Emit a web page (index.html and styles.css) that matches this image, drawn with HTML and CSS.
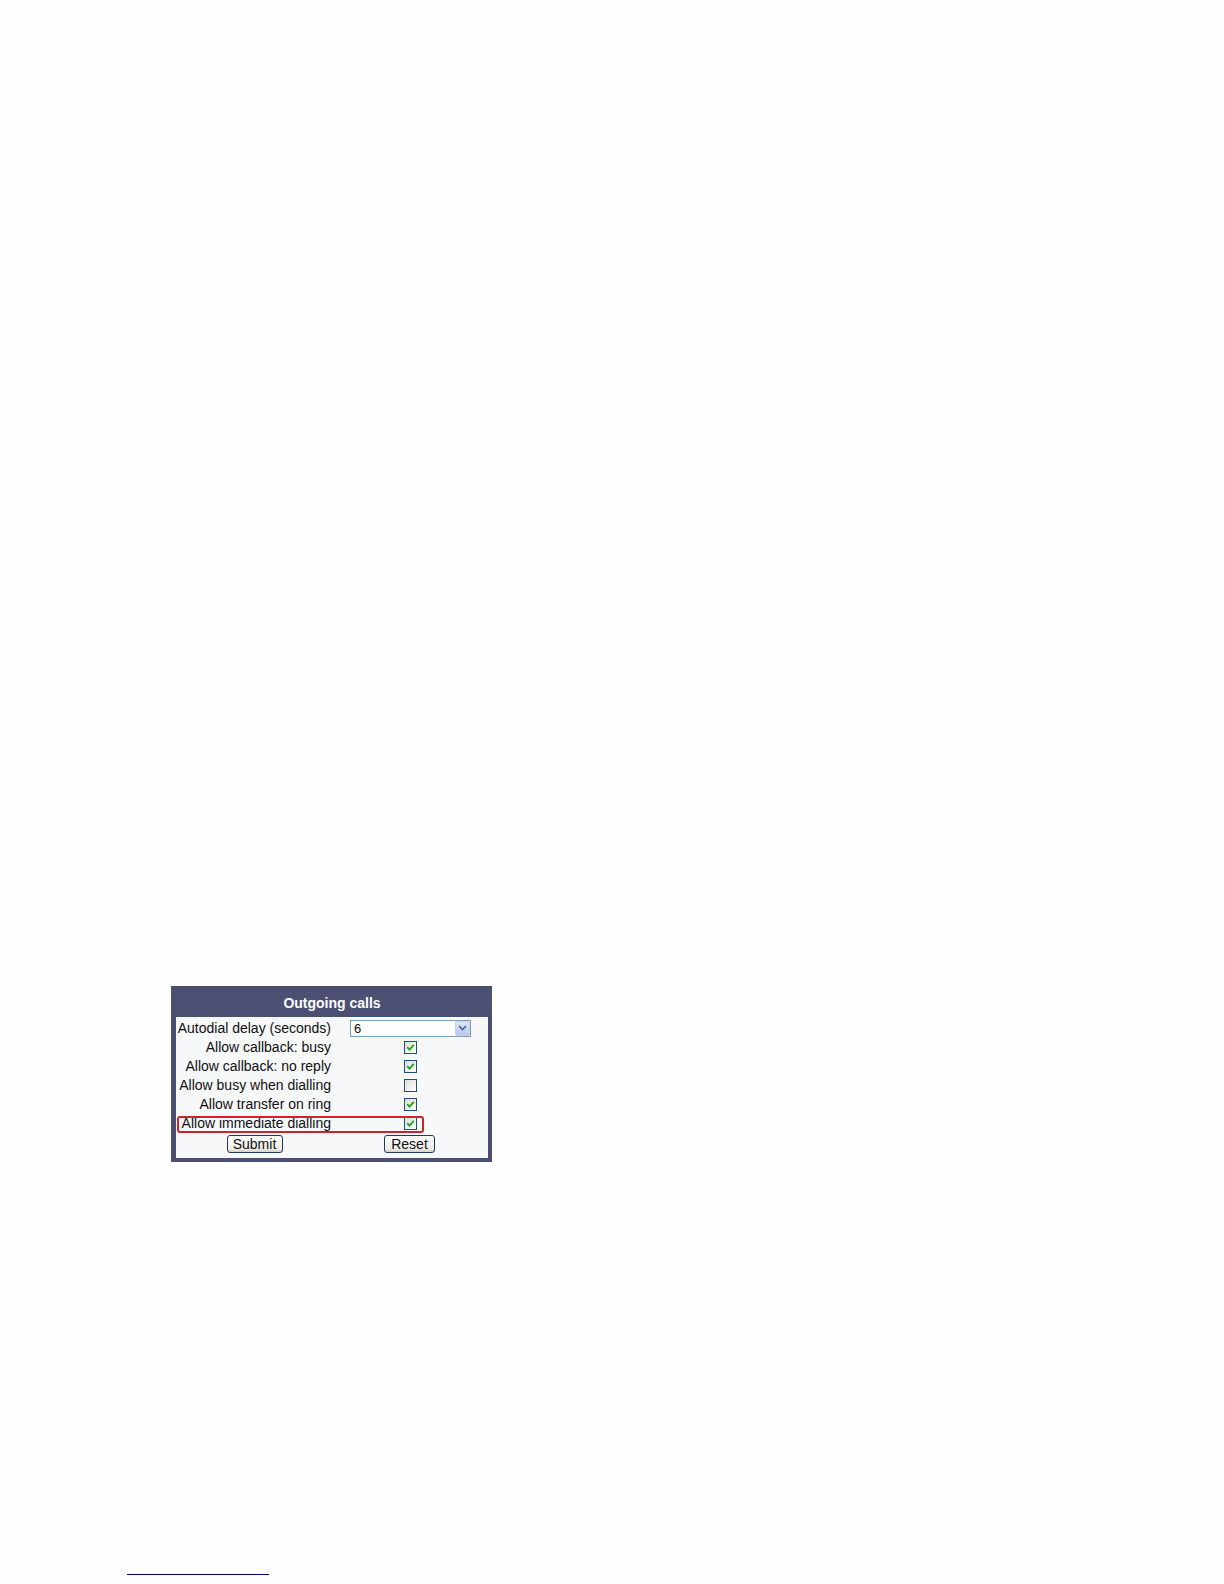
FILE: index.html
```html
<!DOCTYPE html>
<html>
<head>
<meta charset="utf-8">
<link rel="stylesheet" href="styles.css">
</head>
<body>
<div class="panel">
  <div class="panel-title">Outgoing calls</div>
  <div class="panel-body">
    <div class="row row-first">
      <div class="label">Autodial delay (seconds)</div>
      <div class="value value-left">
        <div class="select">
          <span class="select-text">6</span>
          <span class="select-btn">
            <svg width="9" height="6" viewBox="0 0 9 6"><path d="M1 1 L4.5 4.5 L8 1" fill="none" stroke="#4d6185" stroke-width="1.6"/></svg>
          </span>
        </div>
      </div>
    </div>
    <div class="row">
      <div class="label">Allow callback: busy</div>
      <div class="value"><span class="cb checked"><svg width="9" height="9" viewBox="0 0 9 9"><path d="M1.2 4.2 L3.5 6.6 L7.8 1.8" fill="none" stroke="#21a121" stroke-width="1.8"/></svg></span></div>
    </div>
    <div class="row">
      <div class="label">Allow callback: no reply</div>
      <div class="value"><span class="cb checked"><svg width="9" height="9" viewBox="0 0 9 9"><path d="M1.2 4.2 L3.5 6.6 L7.8 1.8" fill="none" stroke="#21a121" stroke-width="1.8"/></svg></span></div>
    </div>
    <div class="row">
      <div class="label">Allow busy when dialling</div>
      <div class="value"><span class="cb"></span></div>
    </div>
    <div class="row">
      <div class="label">Allow transfer on ring</div>
      <div class="value"><span class="cb checked"><svg width="9" height="9" viewBox="0 0 9 9"><path d="M1.2 4.2 L3.5 6.6 L7.8 1.8" fill="none" stroke="#21a121" stroke-width="1.8"/></svg></span></div>
    </div>
    <div class="row row-marked">
      <div class="label">Allow immediate dialling</div>
      <div class="value"><span class="cb checked"><svg width="9" height="9" viewBox="0 0 9 9"><path d="M1.2 4.2 L3.5 6.6 L7.8 1.8" fill="none" stroke="#21a121" stroke-width="1.8"/></svg></span></div>
      <div class="highlight"></div>
    </div>
    <div class="row row-buttons">
      <div class="cell-btn"><button class="btn btn-submit">Submit</button></div>
      <div class="cell-btn"><button class="btn btn-reset">Reset</button></div>
    </div>
  </div>
</div>
<div class="footnote-rule"></div>
</body>
</html>
```

FILE: styles.css
```css
html, body {
  margin: 0;
  padding: 0;
  background: #fefefe;
}

body {
  font-family: "Liberation Sans", Arial, sans-serif;
  font-size: 14px;
  color: #111;
  padding-top: 986px;
  padding-left: 171px;
  padding-bottom: 9px;
}

.panel {
  width: 321px;
  background: #4b4f72;
  padding: 0 4px 4px 5px;
  box-sizing: border-box;
}

.panel-title {
  height: 31px;
  padding-top: 3px;
  box-sizing: border-box;
  line-height: 28px;
  text-align: center;
  color: #ffffff;
  font-weight: bold;
  font-size: 14px;
}

.panel-body {
  background: #f7f8fa;
  width: 312px;
  height: 141px;
  display: flex;
  flex-direction: column;
}

.row {
  display: grid;
  grid-template-columns: 157px 155px;
  height: 19px;
  align-items: center;
  position: relative;
  line-height: 19px;
}

.row-first {
  height: 21px;
  line-height: 21px;
  padding-top: 1px;
  box-sizing: border-box;
}

.label {
  text-align: right;
  padding-right: 2px;
  white-space: nowrap;
}

.value {
  display: flex;
  justify-content: center;
  align-items: center;
  height: 100%;
}

.value-left {
  justify-content: flex-start;
  padding-left: 17px;
  box-sizing: border-box;
}

.select {
  width: 121px;
  height: 17px;
  box-sizing: border-box;
  border: 1px solid #7f9db9;
  background: #ffffff;
  display: flex;
  align-items: center;
  justify-content: space-between;
  margin-top: -1px;
}

.select-text {
  padding-left: 3px;
  font-size: 13px;
  line-height: 15px;
}

.select-btn {
  width: 15px;
  height: 15px;
  box-sizing: border-box;
  background: linear-gradient(#dfe6fb, #b8c6f0);
  border: 1px solid #c3d1f5;
  border-radius: 2px;
  display: flex;
  align-items: center;
  justify-content: center;
}

.cb {
  width: 13px;
  height: 13px;
  box-sizing: border-box;
  border: 1px solid #1c5180;
  background: linear-gradient(135deg, #dcdcd7, #ffffff);
  display: flex;
  align-items: center;
  justify-content: center;
}

.highlight {
  position: absolute;
  left: 1px;
  top: 2px;
  width: 247px;
  height: 17px;
  box-sizing: border-box;
  border: 2px solid #d0222a;
  border-radius: 3px;
}

.row-buttons {
  height: 22px;
  margin-top: 0;
}

.cell-btn {
  display: flex;
  justify-content: center;
  align-items: center;
  height: 100%;
}

.btn {
  font-family: "Liberation Sans", Arial, sans-serif;
  font-size: 14px;
  color: #111;
  height: 18px;
  line-height: 16px;
  padding: 0;
  box-sizing: border-box;
  border: 1px solid #1f3a5a;
  border-radius: 3px;
  background: linear-gradient(#ffffff, #ecebe6 80%, #d6d0c5);
}

.btn-submit {
  width: 56px;
}

.btn-reset {
  width: 51px;
  margin-left: -2px;
}

.footnote-rule {
  margin-top: 412px;
  margin-left: -44px;
  width: 142px;
  border-top: 1px solid #000080;
}
```
